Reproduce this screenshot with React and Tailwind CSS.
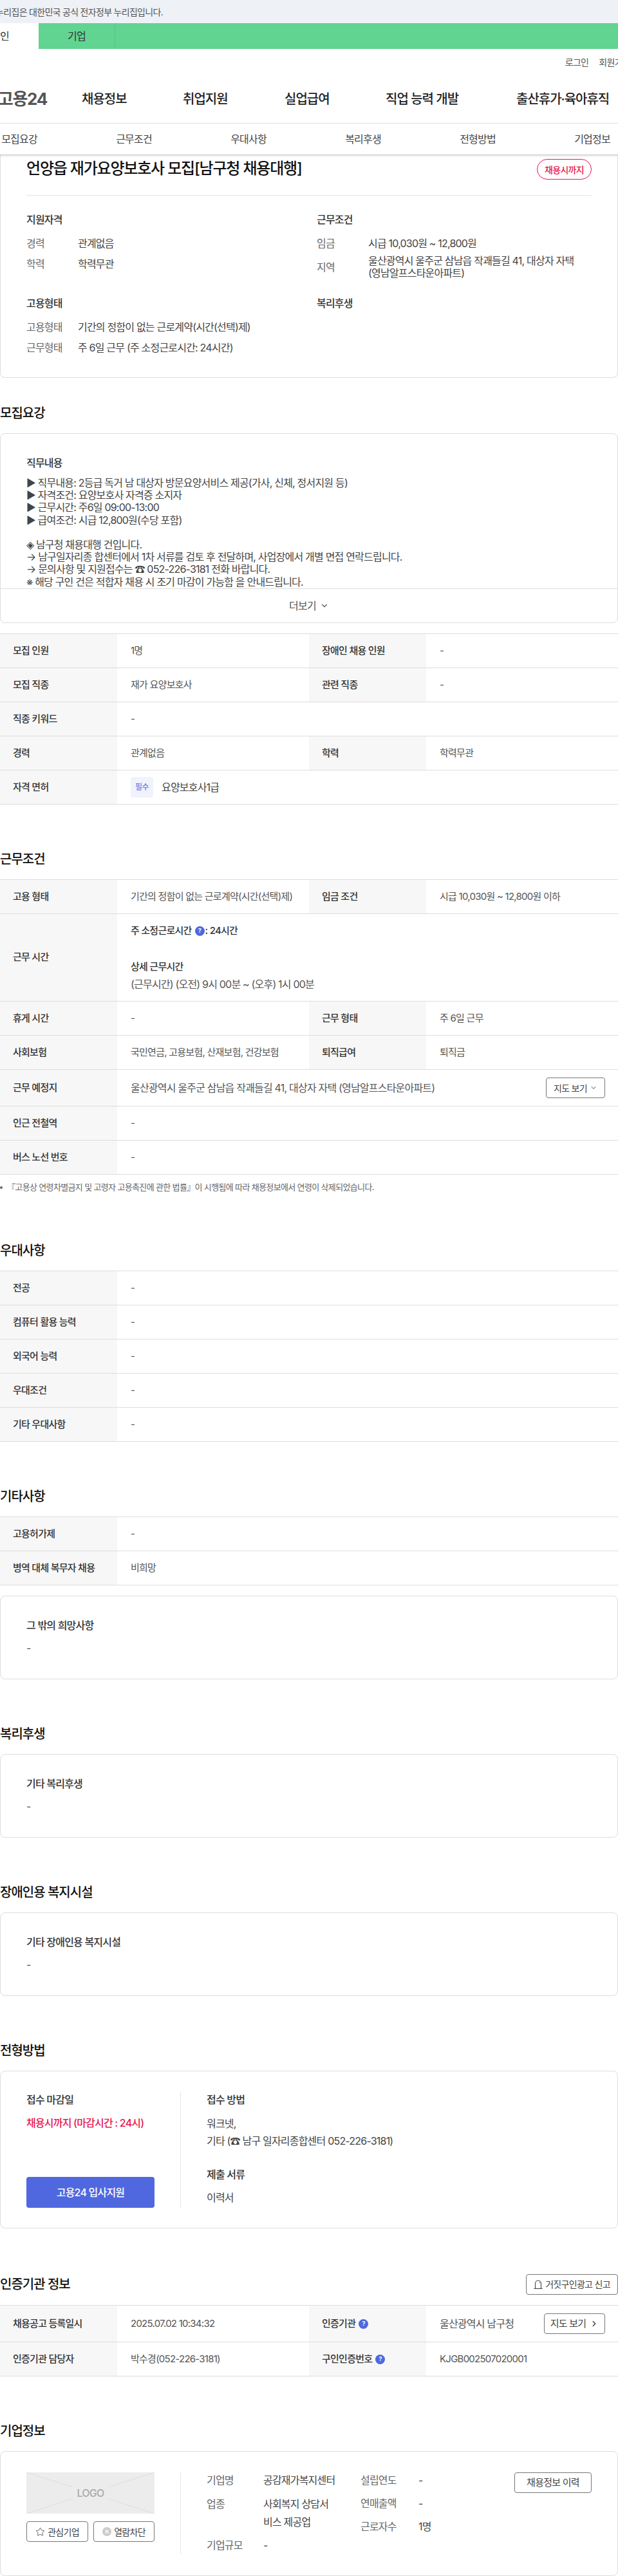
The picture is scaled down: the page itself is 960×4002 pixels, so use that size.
import React from 'react';
import { ChevronDown, ChevronRight, Star } from 'lucide-react';

const Help = () => (
  <span className="inline-flex w-[15px] h-[15px] rounded-full bg-[#4f68e0] text-white text-[9px] font-bold items-center justify-center">?</span>
);

const Th = ({ children }) => (
  <div className="bg-[#f7f7f7] pl-5 flex items-center font-medium text-[#333] text-[15px]">{children}</div>
);
const Td = ({ children, className = '' }) => (
  <div className={`pl-[21px] flex items-center text-[15px] text-[#555] ${className}`}>{children}</div>
);

// 4 column row of the detail tables
const Row = ({ h = 'h-[53px]', a, b, c, d }) => (
  <div className={`grid grid-cols-[182px_298px_182px_298px] border-b border-[#ddd] ${h}`}>
    <Th>{a}</Th>
    <Td>{b}</Td>
    <Th>{c}</Th>
    <Td>{d}</Td>
  </div>
);
// 2 column row
const Wide = ({ h = 'h-[53px]', a, children }) => (
  <div className={`grid grid-cols-[182px_778px] border-b border-[#ddd] ${h}`}>
    <Th>{a}</Th>
    <Td>{children}</Td>
  </div>
);

const Heading = ({ children, className = 'mt-[70px]' }) => (
  <h2 className={`h-[30px] mb-4 flex items-center text-[20px] font-medium text-[#111] ${className}`}>{children}</h2>
);

const TextCard = ({ title }) => (
  <div className="h-[130px] border border-[#ddd] rounded-[8px] px-10 pt-[33px]">
    <div className="h-6 flex items-center text-[16px] font-medium text-[#333]">{title}</div>
    <div className="mt-[11px] h-6 flex items-center text-[16px] text-[#555]">-</div>
  </div>
);

const Info = ({ label, children }) => (
  <div className="flex items-center h-[32px] text-[16px]">
    <div className="w-[80px] text-[#666]">{label}</div>
    <div className="text-[#444]">{children}</div>
  </div>
);

const CoInfo = ({ label, w, children, className = '' }) => (
  <div className={`flex text-[16px] leading-[24px] ${className}`}>
    <div className={`${w} shrink-0 text-[#666]`}>{label}</div>
    <div className="text-[#444]">{children}</div>
  </div>
);

const SubHead = ({ children, className = 'mb-[9px]' }) => (
  <div className={`h-6 flex items-center text-[16px] font-medium text-[#333] ${className}`}>{children}</div>
);

const Tabs = ['모집요강', '근무조건', '우대사항', '복리후생', '전형방법', '기업정보'];

export default function App() {
  return (
    <div className="w-[960px] h-[4002px] overflow-hidden bg-white font-['Inter','Noto_Sans_CJK_KR',sans-serif] [&_*]:tracking-[-0.05em]">
      {/* gov banner */}
      <div className="h-9 bg-[#eef1f6] flex items-center text-[14px] text-[#555] whitespace-nowrap">
        <div className="w-[253px] flex justify-end">이 누리집은 대한민국 공식 전자정부 누리집입니다.</div>
      </div>
      <div className="h-10 bg-[#61d491] flex text-[16px] text-[#333]">
        <div className="w-[60px] bg-white flex items-center">인</div>
        <div className="w-[119px] border-r border-[#56c585] flex items-center justify-center">기업</div>
      </div>

      {/* top links */}
      <div className="h-10 flex items-center justify-end gap-[16px] text-[14px] text-[#555] whitespace-nowrap -mr-[19px]">
        <span>로그인</span>
        <span>회원가입</span>
      </div>

      {/* main nav */}
      <div className="h-[76px] flex items-center whitespace-nowrap border-b border-[#e5e5e5] text-[20px] font-medium text-[#222]">
        <div className="w-[127px] shrink-0 flex justify-end pr-[54px] text-[26px] font-bold text-[#555]">고용24</div>
        <div className="w-[157px] shrink-0">채용정보</div>
        <div className="w-[158px] shrink-0">취업지원</div>
        <div className="w-[157px] shrink-0">실업급여</div>
        <div className="w-[203px] shrink-0">직업 능력 개발</div>
        <div>출산휴가·육아휴직</div>
      </div>

      {/* anchor tabs */}
      <div className="h-[49px] flex items-center -ml-[59px] border-b border-[#ccc] shadow-[0_1px_3px_rgba(0,0,0,0.15)] relative z-10 bg-white w-[1019px]">
        {Tabs.map((t) => (
          <div key={t} className="w-[178px] shrink-0 text-center text-[16px] text-[#444]">{t}</div>
        ))}
      </div>

      {/* summary card, top runs under the sticky tabs */}
      <div className="h-[346px] border border-t-0 border-[#ddd] rounded-b-[8px] px-10">
        <div className="h-[63px] flex justify-between pt-[6px] border-b border-[#e5e5e5]">
          <h1 className="text-[24px] leading-[30px] font-medium text-[#111]">언양읍 재가요양보호사 모집[남구청 채용대행]</h1>
          <div className="w-[85px] h-8 rounded-[16px] border border-[#e8174e] text-[#e8174e] text-[14px] font-medium flex items-center justify-center">채용시까지</div>
        </div>
        <div className="grid grid-cols-[451px_1fr] pt-[25px]">
          <div>
            <SubHead>지원자격</SubHead>
            <Info label="경력">관계없음</Info>
            <Info label="학력">학력무관</Info>
          </div>
          <div>
            <SubHead>근무조건</SubHead>
            <Info label="임금">시급 10,030원 ~ 12,800원</Info>
            <div className="mt-[2px] flex items-center text-[16px] leading-[19px]">
              <div className="w-[80px] text-[#666]">지역</div>
              <div className="text-[#444]">울산광역시 울주군 삼남읍 작괘들길 41, 대상자 자택<br />(영남알프스타운아파트)</div>
            </div>
          </div>
        </div>
        <div className="grid grid-cols-[451px_1fr] mt-[25px]">
          <div>
            <SubHead>고용형태</SubHead>
            <Info label="고용형태">기간의 정함이 없는 근로계약(시간(선택)제)</Info>
            <Info label="근무형태">주 6일 근무 (주 소정근로시간: 24시간)</Info>
          </div>
          <div>
            <SubHead>복리후생</SubHead>
          </div>
        </div>
      </div>

      {/* 모집요강 */}
      <Heading className="mt-10">모집요강</Heading>
      <div className="h-[295px] border border-[#ddd] rounded-[8px] overflow-hidden">
        <div className="h-[241px] overflow-hidden border-b border-[#ddd] px-10 pt-[33px]">
          <SubHead className="mb-[10px]">직무내용</SubHead>
          <div className="text-[16px] leading-[19.2px] text-[#444] whitespace-nowrap">
            ▶ 직무내용: 2등급 독거 남 대상자 방문요양서비스 제공(가사, 신체, 정서지원 등)<br />
            ▶ 자격조건: 요양보호사 자격증 소지자<br />
            ▶ 근무시간: 주6일 09:00-13:00<br />
            ▶ 급여조건: 시급 12,800원(수당 포함)<br />
            <br />
            ◈ 남구청 채용대행 건입니다.<br />
            → 남구일자리종 합센터에서 1차 서류를 검토 후 전달하며, 사업장에서 개별 면접 연락드립니다.<br />
            → 문의사항 및 지원접수는 ☎ 052-226-3181 전화 바랍니다.<br />
            ※ 해당 구인 건은 적합자 채용 시 조기 마감이 가능함 을 안내드립니다.
          </div>
        </div>
        <div className="h-[52px] flex items-center justify-center gap-[6px] text-[16px] text-[#555]">
          더보기 <ChevronDown size={14} strokeWidth={2} />
        </div>
      </div>

      <div className="mt-4 border-t border-[#ddd]">
        <Row a="모집 인원" b="1명" c="장애인 채용 인원" d="-" />
        <Row a="모집 직종" b="재가 요양보호사" c="관련 직종" d="-" />
        <Wide a="직종 키워드">-</Wide>
        <Row a="경력" b="관계없음" c="학력" d="학력무관" />
        <Wide a="자격 면허">
          <span className="w-[35px] h-[32px] rounded-[4px] bg-[#f0f2fc] text-[#4f68e0] text-[12px] flex items-center justify-center mr-[13px]">필수</span>
          <span className="text-[16px] text-[#444]">요양보호사1급</span>
        </Wide>
      </div>

      {/* 근무조건 */}
      <Heading>근무조건</Heading>
      <div className="border-t border-[#ddd]">
        <Row a="고용 형태" b="기간의 정함이 없는 근로계약(시간(선택)제)" c="임금 조건" d="시급 10,030원 ~ 12,800원 이하" />
        <div className="grid grid-cols-[182px_778px] border-b border-[#ddd] h-[136px]">
          <Th>근무 시간</Th>
          <div className="pl-[21px] pt-[14px] text-[15px] text-[#555]">
            <div className="h-[24px] flex items-center gap-[5px] font-medium text-[#333]">주 소정근로시간 <span className="flex items-center"><Help /><span className="ml-[1px]">: 24시간</span></span></div>
            <div className="mt-[32px] h-[24px] flex items-center font-medium text-[#333]">상세 근무시간</div>
            <div className="mt-[3px] h-[24px] flex items-center text-[16px]">(근무시간) (오전) 9시 00분 ~ (오후) 1시 00분</div>
          </div>
        </div>
        <Row a="휴게 시간" b="-" c="근무 형태" d="주 6일 근무" />
        <Row a="사회보험" b="국민연금, 고용보험, 산재보험, 건강보험" c="퇴직급여" d="퇴직금" />
        <div className="grid grid-cols-[182px_778px] border-b border-[#ddd] h-[57px]">
          <Th>근무 예정지</Th>
          <div className="pl-[21px] pr-5 flex items-center justify-between text-[15px] text-[#555]">
            <span className="text-[16px]">울산광역시 울주군 삼남읍 작괘들길 41, 대상자 자택 (영남알프스타운아파트)</span>
            <button className="w-[92px] h-8 border border-[#777] rounded-[4px] flex items-center justify-center gap-[4px] text-[14px] text-[#444]">지도 보기 <ChevronDown size={12} /></button>
          </div>
        </div>
        <Wide a="인근 전철역">-</Wide>
        <Wide a="버스 노선 번호">-</Wide>
      </div>
      <div className="mt-[10px] flex items-center h-5 text-[13px] text-[#666]">
        <span className="w-1 h-1 rounded-full bg-[#666] mr-[7px]"></span>
        『고용상 연령차별금지 및 고령자 고용촉진에 관한 법률』이 시행됨에 따라 채용정보에서 연령이 삭제되었습니다.
      </div>

      {/* 우대사항 */}
      <Heading className="mt-[73px]">우대사항</Heading>
      <div className="border-t border-[#ddd]">
        <Wide a="전공">-</Wide>
        <Wide a="컴퓨터 활용 능력">-</Wide>
        <Wide a="외국어 능력">-</Wide>
        <Wide a="우대조건">-</Wide>
        <Wide a="기타 우대사항">-</Wide>
      </div>

      {/* 기타사항 */}
      <Heading>기타사항</Heading>
      <div className="border-t border-[#ddd]">
        <Wide a="고용허가제">-</Wide>
        <Wide a="병역 대체 복무자 채용">비희망</Wide>
      </div>
      <div className="mt-4">
        <TextCard title="그 밖의 희망사항" />
      </div>

      <Heading>복리후생</Heading>
      <TextCard title="기타 복리후생" />

      <Heading>장애인용 복지시설</Heading>
      <TextCard title="기타 장애인용 복지시설" />

      {/* 전형방법 */}
      <Heading>전형방법</Heading>
      <div className="h-[245px] border border-[#ddd] rounded-[8px] px-10 pt-[32px] flex">
        <div className="w-[240px] h-[180px] border-r border-[#e5e5e5] pr-10 shrink-0 flex flex-col">
          <div className="h-6 flex items-center text-[16px] font-medium text-[#333]">접수 마감일</div>
          <div className="mt-[12px] h-6 flex items-center text-[16px] font-medium text-[#e8174e] whitespace-nowrap">채용시까지 (마감시간 : 24시)</div>
          <button className="mt-auto h-12 w-[199px] bg-[#4f68e0] rounded-[4px] text-white text-[16px] font-medium">고용24 입사지원</button>
        </div>
        <div className="pl-10 text-[16px] text-[#444]">
          <div className="h-6 flex items-center font-medium text-[#333]">접수 방법</div>
          <div className="mt-[12px] leading-[27px]">워크넷,<br />기타 (☎ 남구 일자리종합센터 052-226-3181)</div>
          <div className="mt-[26px] h-6 flex items-center font-medium text-[#333]">제출 서류</div>
          <div className="mt-[12px] h-6 flex items-center">이력서</div>
        </div>
      </div>

      {/* 인증기관 정보 */}
      <div className="mt-[71px] h-[31px] mb-[17px] flex items-center justify-between">
        <h2 className="text-[20px] font-medium text-[#111]">인증기관 정보</h2>
        <button className="w-[143px] h-8 border border-[#777] rounded-[4px] flex items-center justify-center gap-[4px] text-[14px] text-[#444]">
          <svg width="14" height="16" viewBox="0 0 14 16" fill="none" stroke="#444" strokeWidth="1.1"><path d="M2.5 14V6.5a4.5 4.5 0 0 1 9 0V14" /><path d="M0.5 14.5h13" /><path d="M9 4.5l1 1.5" /></svg>
          거짓구인광고 신고
        </button>
      </div>
      <div className="border-t border-[#ddd]">
        <div className="grid grid-cols-[182px_298px_182px_298px] border-b border-[#ddd] h-[57px]">
          <Th>채용공고 등록일시</Th>
          <Td>2025.07.02 10:34:32</Td>
          <Th><span className="flex items-center gap-[5px]">인증기관 <Help /></span></Th>
          <div className="pl-[21px] pr-5 flex items-center justify-between">
            <span className="text-[16px] text-[#555]">울산광역시 남구청</span>
            <button className="w-[95px] h-8 border border-[#777] rounded-[4px] flex items-center justify-center gap-[6px] text-[15px] text-[#444]">지도 보기 <ChevronRight size={14} strokeWidth={2.5} /></button>
          </div>
        </div>
        <Row a="인증기관 담당자" b="박수경(052-226-3181)" c={<span className="flex items-center gap-[5px]">구인인증번호 <Help /></span>} d="KJGB002507020001" />
      </div>

      {/* 기업정보 */}
      <Heading>기업정보</Heading>
      <div className="h-[194px] border border-[#ddd] rounded-[8px] px-10 pt-[32px] flex">
        <div className="w-[240px] h-[127px] border-r border-[#e5e5e5] pr-10 shrink-0">
          <div className="relative h-16 w-[199px] bg-[#ececec] flex items-center justify-center text-[16px] font-medium text-[#aaa]">
            <svg className="absolute inset-0" width="199" height="64" viewBox="0 0 199 64" fill="none" stroke="#ddd">
              <path d="M0 0L72 23M199 0L127 23M0 64L72 41M199 64L127 41" />
            </svg>
            LOGO
          </div>
          <div className="mt-3 flex justify-between text-[14px] text-[#444]">
            <button className="w-[96px] h-8 border border-[#777] rounded-[4px] flex items-center justify-center gap-[4px]"><Star size={15} strokeWidth={1.3} />관심기업</button>
            <button className="w-[95px] h-8 border border-[#777] rounded-[4px] flex items-center justify-center gap-[4px]">
              <svg width="14" height="14" viewBox="0 0 14 14"><circle cx="7" cy="7" r="7" fill="#ccc" /><path d="M4.5 4.5l5 5M9.5 4.5l-5 5" stroke="#fff" strokeWidth="1.3" /></svg>
              열람차단
            </button>
          </div>
        </div>
        <div className="pl-10 w-[279px] shrink-0">
          <CoInfo label="기업명" w="w-[88px]">공감재가복지센터</CoInfo>
          <CoInfo label="업종" w="w-[88px]" className="mt-[11px] leading-[28px]"><div className="w-[105px] leading-[28px]">사회복지 상담서비스 제공업</div></CoInfo>
          <CoInfo label="기업규모" w="w-[88px]" className="mt-[10px]">-</CoInfo>
        </div>
        <div className="w-[239px] shrink-0">
          <CoInfo label="설립연도" w="w-[90px]">-</CoInfo>
          <CoInfo label="연매출액" w="w-[90px]" className="mt-[12px]">-</CoInfo>
          <CoInfo label="근로자수" w="w-[90px]" className="mt-[12px]">1명</CoInfo>
        </div>
        <button className="w-[120px] h-8 border border-[#777] rounded-[4px] text-[15px] text-[#444] shrink-0">채용정보 이력</button>
      </div>
    </div>
  );
}
